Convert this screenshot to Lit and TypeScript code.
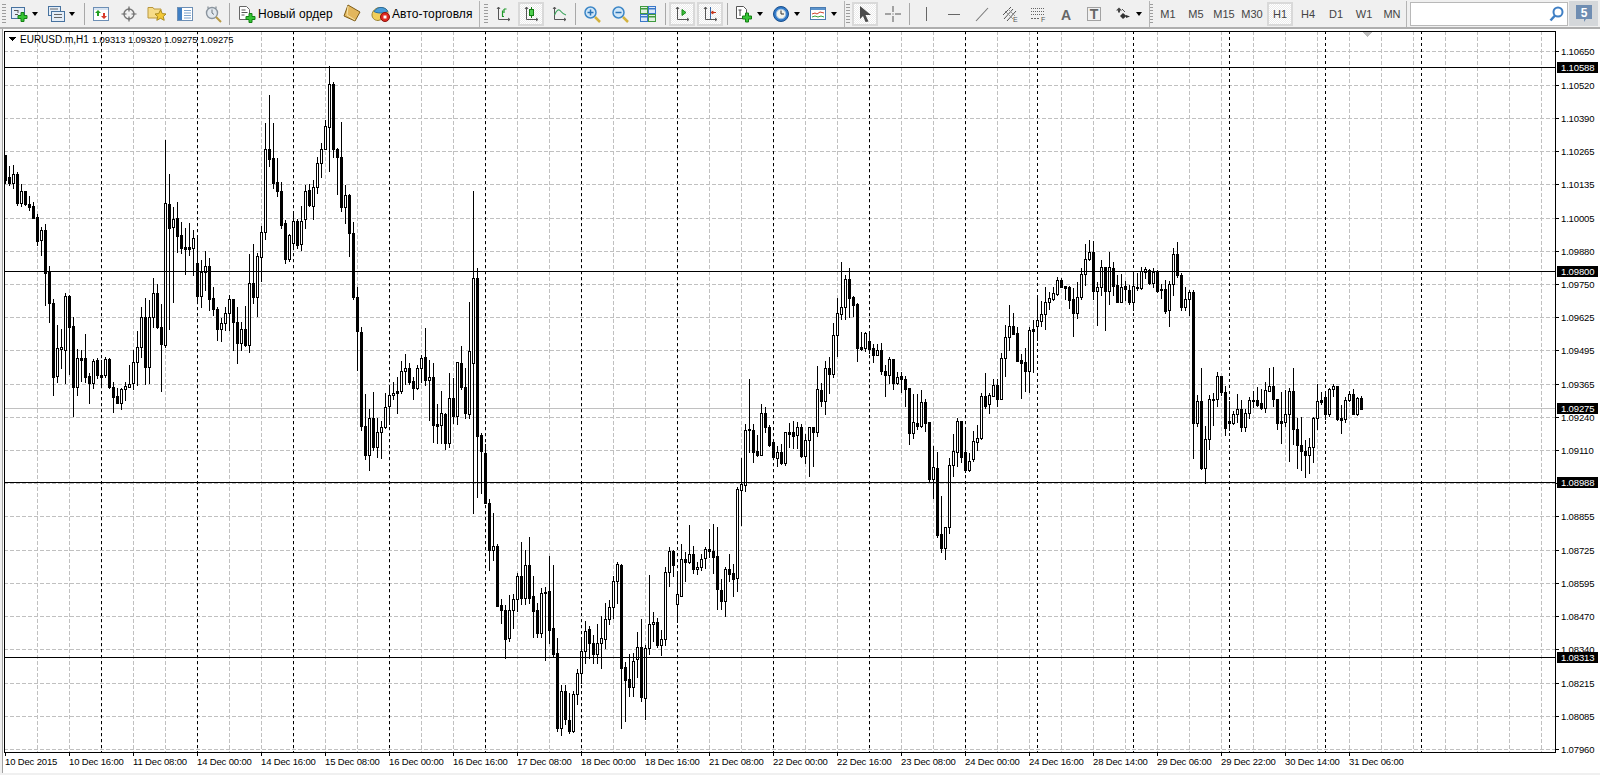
import { LitElement, html, css, svg } from 'lit';
import { customElement } from 'lit/decorators.js';

// candles, read off the chart: [wick top, wick bottom, body top, body bottom, bull]
// each block is in its own scaled units, y = y0 + v / scale
type Row = [number, number, number, number, number];
interface Block {
  y0: number;
  scale: number;
  rows: Row[];
}

const BLOCKS: Block[] = [
  {
    y0: 120,
    scale: 3,
    rows: [
      [105, 188, 105, 180, 0], [138, 195, 170, 188, 0], [135, 205, 163, 188, 1], [155, 255, 162, 250, 0],
      [193, 257, 214, 250, 1], [213, 255, 213, 253, 0], [228, 270, 252, 260, 0], [245, 295, 259, 293, 0],
      [283, 375, 292, 362, 0], [320, 405, 331, 361, 1], [313, 555, 330, 458, 0], [438, 605, 455, 550, 0],
      [538, 825, 550, 770, 0], [615, 785, 685, 767, 1], [628, 745, 682, 687, 1], [518, 790, 528, 690, 1],
      [525, 762, 528, 620, 0], [590, 888, 618, 800, 0], [688, 825, 715, 802, 1], [690, 782, 714, 720, 0],
      [642, 785, 715, 770, 0], [760, 848, 768, 788, 0], [718, 803, 722, 788, 1], [715, 775, 720, 765, 0],
      [720, 800, 765, 770, 0], [712, 772, 718, 766, 1], [715, 805, 718, 802, 0], [785, 875, 802, 830, 0],
      [803, 850, 828, 848, 0], [805, 868, 808, 848, 1], [785, 840, 798, 808, 1], [735, 800, 793, 800, 1],
      [690, 808, 727, 790, 1], [632, 795, 680, 727, 1], [560, 712, 592, 680, 1], [535, 792, 590, 742, 0],
      [540, 790, 592, 742, 1], [475, 620, 520, 590, 1], [492, 625, 520, 622, 0], [553, 812, 620, 673, 0],
      [60, 680, 250, 675, 1], [163, 627, 253, 325, 0], [260, 545, 296, 322, 1], [247, 395, 295, 347, 0],
      [305, 400, 345, 383, 0], [325, 462, 381, 386, 0], [310, 405, 381, 386, 0], [330, 465, 355, 385, 1],
      [345, 550, 428, 527, 0], [420, 560, 455, 527, 1], [392, 510, 438, 455, 1], [415, 570, 438, 537, 0],
      [502, 585, 535, 568, 0], [560, 660, 568, 628, 0], [595, 662, 610, 628, 1], [562, 630, 580, 610, 1],
      [525, 630, 538, 580, 1], [537, 690, 538, 605, 0], [560, 728, 605, 668, 0], [605, 690, 628, 668, 1],
      [558, 678, 628, 676, 0], [403, 695, 490, 675, 1], [372, 548, 490, 530, 0], [398, 588, 408, 530, 1],
    ],
  },
  {
    y0: 60,
    scale: 3,
    rows: [
      [498, 662, 515, 590, 1], [190, 537, 268, 515, 1], [105, 318, 268, 296, 0], [190, 383, 295, 368, 0],
      [295, 407, 367, 392, 0], [367, 503, 392, 494, 0], [480, 608, 490, 596, 0], [522, 602, 526, 596, 1],
      [455, 557, 484, 548, 1], [478, 565, 484, 554, 0], [438, 570, 482, 551, 1], [375, 505, 394, 478, 1],
      [372, 438, 390, 436, 0], [360, 477, 380, 437, 1], [290, 398, 310, 380, 1], [250, 350, 268, 310, 1],
      [180, 268, 199, 268, 1], [18, 333, 73, 200, 1], [67, 290, 72, 266, 0], [265, 402, 266, 290, 0],
      [187, 452, 290, 442, 0], [375, 490, 405, 440, 1], [403, 587, 405, 520, 0], [487, 716, 520, 710, 0],
      [682, 930, 710, 812, 0], [802, 1110, 815, 1097, 0], [1003, 1197, 1097, 1184, 0], [1048, 1230, 1075, 1184, 1],
      [996, 1170, 1075, 1160, 0], [1075, 1190, 1117, 1160, 1], [1083, 1193, 1100, 1117, 1], [998, 1105, 1042, 1100, 1],
      [985, 1092, 1006, 1037, 1], [965, 1017, 1000, 1006, 1], [950, 1058, 994, 998, 0], [903, 1000, 934, 994, 1],
      [882, 972, 925, 932, 1], [910, 973, 925, 966, 0], [950, 1017, 964, 983, 0], [915, 987, 925, 984, 1],
      [885, 965, 895, 925, 1], [805, 975, 892, 959, 0], [900, 1080, 952, 959, 1], [910, 1147, 952, 1095, 0],
      [1033, 1148, 1093, 1097, 0], [993, 1150, 1060, 1096, 1], [1060, 1167, 1062, 1148, 0], [940, 1160, 1015, 1148, 1],
      [955, 1090, 1015, 1067, 0], [905, 1092, 907, 1067, 1], [858, 986, 910, 980, 0], [925, 1075, 980, 1060, 0],
    ],
  },
  {
    y0: 180,
    scale: 2.8,
    rows: [
      [342, 665, 480, 655, 1], [30, 932, 275, 513, 1], [247, 888, 275, 716, 0], [708, 875, 715, 758, 0],
      [740, 905, 763, 905, 0], [893, 1092, 905, 1037, 0], [932, 1063, 1026, 1035, 1], [1020, 1192, 1026, 1192, 0],
      [1173, 1240, 1190, 1203, 0], [1190, 1337, 1205, 1284, 0], [1162, 1290, 1205, 1281, 1], [1160, 1254, 1174, 1205, 1],
      [1100, 1207, 1110, 1174, 1], [1014, 1187, 1110, 1170, 0], [1036, 1187, 1079, 1170, 1], [1000, 1185, 1079, 1170, 0],
      [1108, 1280, 1165, 1206, 0], [1185, 1280, 1205, 1268, 0], [1143, 1280, 1155, 1268, 1], [1140, 1343, 1153, 1156, 0],
      [1053, 1295, 1152, 1260, 0], [1078, 1332, 1255, 1327, 0], [1283, 1543, 1323, 1533, 0], [1414, 1553, 1432, 1533, 1],
      [1415, 1523, 1432, 1510, 0], [1435, 1547, 1513, 1543, 0], [1430, 1545, 1440, 1542, 1], [1370, 1467, 1381, 1440, 1],
      [1282, 1407, 1320, 1381, 1], [1235, 1352, 1262, 1320, 1], [1250, 1337, 1258, 1295, 0], [1273, 1352, 1296, 1327, 0],
      [1243, 1352, 1295, 1326, 1],
    ],
  },
  {
    y0: 370,
    scale: 3,
    rows: [
      [737, 893, 805, 820, 1], [700, 833, 748, 806, 1], [690, 762, 710, 748, 1], [618, 745, 634, 710, 1],
      [577, 698, 583, 632, 1], [583, 1073, 585, 893, 0], [877, 1052, 892, 930, 0], [852, 977, 928, 950, 0],
      [850, 977, 872, 950, 1], [787, 922, 832, 868, 1], [748, 992, 832, 980, 0], [825, 1047, 835, 983, 1],
      [615, 853, 763, 835, 1], [725, 813, 755, 763, 1], [745, 830, 757, 825, 0], [780, 855, 808, 825, 1],
      [590, 825, 607, 808, 1], [530, 648, 544, 607, 1], [540, 617, 544, 585, 0], [603, 755, 673, 703, 1],
      [522, 677, 568, 677, 1], [547, 632, 568, 575, 0], [465, 580, 553, 575, 1], [528, 608, 553, 596, 0],
      [575, 613, 590, 598, 1], [552, 600, 566, 590, 1], [530, 595, 538, 565, 1], [477, 560, 538, 542, 0],
      [462, 608, 542, 560, 0], [472, 717, 559, 658, 0], [628, 717, 660, 692, 0], [590, 738, 598, 692, 1],
      [553, 632, 598, 611, 0], [582, 678, 610, 628, 0], [352, 662, 358, 625, 1], [265, 465, 343, 361, 1],
      [163, 362, 181, 346, 1], [28, 245, 178, 181, 0], [163, 275, 181, 245, 0], [195, 258, 243, 254, 0],
      [103, 255, 130, 254, 1], [112, 185, 130, 172, 0], [165, 228, 172, 225, 0], [213, 268, 217, 260, 0],
    ],
  },
  {
    y0: 250,
    scale: 3,
    rows: [
      [588, 648, 605, 625, 1], [583, 642, 607, 640, 0], [545, 645, 547, 640, 1], [520, 590, 547, 551, 0],
      [514, 595, 547, 557, 0], [517, 595, 532, 556, 1], [522, 620, 532, 617, 0], [552, 638, 571, 617, 1],
      [530, 677, 532, 571, 1], [530, 648, 532, 547, 0], [348, 557, 418, 547, 1], [400, 467, 420, 452, 0],
      [332, 492, 355, 452, 1], [322, 428, 355, 371, 0], [220, 380, 256, 371, 1], [145, 318, 190, 256, 1],
      [37, 207, 172, 191, 1], [75, 207, 88, 172, 1], [55, 200, 88, 143, 0], [138, 197, 142, 164, 0],
      [160, 332, 163, 293, 0], [247, 300, 292, 297, 0], [247, 302, 250, 295, 1], [245, 310, 274, 296, 0],
      [283, 335, 295, 314, 0], [283, 315, 301, 314, 1], [280, 373, 301, 362, 0], [345, 437, 362, 374, 0],
      [320, 400, 328, 374, 1], [328, 417, 328, 398, 0], [365, 402, 380, 398, 1], [365, 425, 379, 388, 0],
      [378, 468, 388, 416, 0], [415, 582, 415, 548, 0], [432, 565, 517, 548, 1], [432, 537, 520, 527, 0],
      [420, 530, 457, 527, 1], [448, 543, 457, 518, 0], [515, 697, 517, 687, 0], [587, 743, 652, 686, 1],
      [606, 860, 655, 855, 0], [738, 905, 853, 893, 0], [830, 927, 832, 893, 1], [625, 850, 646, 832, 1],
      [552, 678, 604, 646, 1], [503, 648, 514, 605, 1], [515, 635, 514, 620, 0], [530, 665, 607, 660, 0],
      [610, 662, 632, 660, 1], [543, 632, 574, 628, 1],
    ],
  },
  {
    y0: 230,
    scale: 3,
    rows: [
      [585, 660, 625, 635, 1], [490, 628, 499, 625, 1], [430, 535, 499, 527, 0], [490, 548, 495, 523, 1],
      [448, 497, 466, 497, 1], [447, 527, 465, 506, 0], [368, 506, 385, 506, 1], [285, 437, 322, 385, 1],
      [225, 360, 289, 322, 1], [250, 312, 289, 311, 0], [290, 392, 310, 392, 0], [373, 503, 391, 398, 0],
      [354, 483, 396, 423, 0], [290, 485, 301, 422, 1], [270, 425, 298, 302, 0], [195, 330, 271, 287, 1],
      [213, 288, 253, 272, 1], [170, 297, 217, 253, 1], [185, 237, 205, 217, 1], [170, 210, 190, 208, 1],
      [142, 194, 151, 191, 1], [145, 172, 151, 170, 0], [167, 207, 169, 173, 0], [168, 233, 172, 210, 0],
      [173, 317, 208, 248, 0], [155, 263, 202, 248, 1], [115, 207, 132, 200, 1], [43, 165, 88, 133, 1],
      [30, 90, 67, 88, 1], [33, 207, 66, 182, 0], [155, 285, 172, 182, 1], [90, 195, 112, 172, 1],
      [110, 300, 111, 182, 0], [67, 222, 112, 182, 1], [95, 195, 115, 168, 0], [135, 215, 165, 215, 0],
      [133, 217, 170, 215, 1], [153, 210, 168, 178, 0], [165, 222, 181, 216, 0], [130, 240, 169, 217, 1],
      [130, 180, 171, 173, 0], [110, 176, 124, 173, 1], [110, 145, 118, 127, 1], [117, 163, 119, 158, 0],
      [115, 172, 125, 158, 1], [120, 185, 124, 182, 0], [163, 205, 178, 181, 0], [150, 250, 177, 242, 0],
      [153, 287, 163, 241, 1], [55, 195, 73, 163, 1], [37, 140, 73, 136, 0], [130, 240, 136, 230, 0],
      [170, 240, 208, 230, 1], [180, 255, 185, 208, 1],
    ],
  },
  {
    y0: 340,
    scale: 3,
    rows: [
      [-150, 353, -145, 248, 0], [165, 258, 183, 248, 1], [85, 388, 183, 385, 0], [258, 430, 298, 383, 1],
      [165, 328, 178, 298, 1], [160, 255, 177, 180, 0], [97, 197, 108, 178, 1], [108, 165, 108, 155, 0],
      [138, 285, 156, 263, 0], [183, 270, 244, 248, 0], [212, 252, 223, 248, 1], [163, 247, 208, 223, 1],
      [180, 273, 207, 260, 0], [207, 273, 220, 260, 1], [172, 233, 180, 220, 1], [153, 200, 181, 184, 0],
      [140, 198, 181, 194, 0], [148, 207, 190, 205, 0], [125, 217, 151, 205, 1], [85, 152, 139, 152, 1],
      [82, 197, 139, 178, 0], [178, 267, 178, 250, 0], [155, 308, 243, 248, 0], [150, 257, 223, 245, 1],
      [143, 362, 153, 223, 1], [85, 312, 153, 268, 0], [235, 383, 268, 314, 0], [232, 390, 316, 332, 0],
      [300, 410, 332, 344, 0], [295, 400, 322, 344, 1], [232, 367, 235, 322, 1], [132, 268, 184, 235, 1],
      [157, 193, 180, 185, 0], [152, 237, 172, 221, 0], [145, 228, 148, 221, 1], [133, 168, 139, 148, 1],
      [138, 240, 139, 238, 0], [195, 278, 234, 239, 0], [170, 245, 181, 238, 1], [152, 183, 163, 181, 1],
      [148, 223, 163, 221, 0], [170, 225, 175, 221, 1], [168, 207, 175, 206, 0],
    ],
  },
];

const CANDLES = BLOCKS.flatMap((b) =>
  b.rows.map(([hi, lo, top, bottom, bull]) => ({
    hi: Math.round(b.y0 + hi / b.scale),
    lo: Math.round(b.y0 + lo / b.scale),
    top: Math.round(b.y0 + top / b.scale),
    bottom: Math.round(b.y0 + bottom / b.scale),
    bull: bull === 1,
  }))
);

const PRICES = [
  '1.10650', '1.10520', '1.10390', '1.10265', '1.10135', '1.10005', '1.09880', '1.09750', '1.09625', '1.09495', '1.09365',
  '1.09240', '1.09110', '1.08985', '1.08855', '1.08725', '1.08595', '1.08470', '1.08340', '1.08215', '1.08085', '1.07960',
];
const priceY = (k: number) => Math.round(51.4 + 33.22 * k);

const DATES = [
  '10 Dec 2015', '10 Dec 16:00', '11 Dec 08:00', '14 Dec 00:00', '14 Dec 16:00', '15 Dec 08:00', '16 Dec 00:00', '16 Dec 16:00',
  '17 Dec 08:00', '18 Dec 00:00', '18 Dec 16:00', '21 Dec 08:00', '22 Dec 00:00', '22 Dec 16:00', '23 Dec 08:00', '24 Dec 00:00',
  '24 Dec 16:00', '28 Dec 14:00', '29 Dec 06:00', '29 Dec 22:00', '30 Dec 14:00', '31 Dec 06:00',
];

const LEVELS = [
  { y: 67, label: '1.10588' },
  { y: 271, label: '1.09800' },
  { y: 482, label: '1.08988' },
  { y: 657, label: '1.08313' },
];

const GREY_X = Array.from({ length: 48 }, (_, k) => 37 + 32 * k);
const BLACK_X = [101, 197, 293, 389, 485, 581, 677, 773, 869, 965, 1037, 1133, 1229, 1325, 1421];

const L = 4, R = 1555, T = 31, B = 752;

const plus = (x: number, y: number) => svg`<path transform="translate(${x} ${y})" d="M3 .5h3v3h3v3H6v3H3v-3H0v-3h3z" fill="#35c535" stroke="#147f14"/>`;
const axes = svg`<path d="M3.5 1v12.5H15M2 3l1.5-2L5 3M13 12l2 1.5-2 1.5" fill="none" stroke="#555"/>`;

const ICONS: Record<string, unknown> = {
  newchart: svg`<rect x=".5" y="1.5" width="13" height="11" fill="#e4edf7" stroke="#47729f"/><path d="M3 4.5h4M7 4v3M4 8.5h3" stroke="#555"/>${plus(7, 6)}`,
  profiles: svg`<rect x=".5" y=".5" width="12" height="9" fill="#e4edf7" stroke="#47729f"/><rect x="3.5" y="5.5" width="13" height="10" fill="#e4edf7" stroke="#47729f"/><path d="M6 8.5h8M6 11.5h8M2 3h8" stroke="#666"/>`,
  watch: svg`<rect x=".5" y="1.5" width="15" height="13" fill="#fff" stroke="#6d8fb5"/><rect x="1" y="2" width="14" height="2" fill="#d8e4f2"/><path d="M5 4l3 3H6v3H4V7H2z" fill="#22a022"/><path d="M11 13l3-3h-2V7h-2v3H8z" fill="#d83a2a"/>`,
  cross: svg`<circle cx="8" cy="8" r="5" fill="none" stroke="#777" stroke-width="1.4"/><path d="M8 .5v5M8 10.500v5M.5 8h5M10.500 8h5" stroke="#666" stroke-width="1.2"/>`,
  star: svg`<path d="M-1 1.500h5l1 1.500h7v9H-1z" fill="#f6dc88" stroke="#b9973f"/><path d="M11.500 4l1.800 3.600 3.700.4-2.700 2.500.9 3.800-3.700-2-3.700 2 .9-3.800-2.700-2.500 3.700-.4z" fill="#f3c938" stroke="#a98a20"/>`,
  nav: svg`<rect x=".5" y="1.5" width="15" height="13" fill="#fff" stroke="#6d8fb5"/><rect x="1" y="2" width="4" height="12" fill="#3f7fc4"/><path d="M7 4.500h7M7 7h7M7 9.500h7M7 12h7" stroke="#7fa4cc"/>`,
  tester: svg`<circle cx="7" cy="7" r="5.500" fill="#e2e8ee" stroke="#8a949e" stroke-width="1.400"/><path d="M7 3.500V7l2 1.500M3 .5v2M11 .5v2" fill="none" stroke="#6b7680"/><path d="M11 11l5 5" stroke="#b99a45" stroke-width="2"/>`,
  order: svg`<path d="M.5 .5h7l3 3v10H.5z" fill="#fff" stroke="#666"/><path d="M2.500 4h4M2.500 6.500h6M2.500 9h3" stroke="#555"/>${plus(7, 7)}`,
  gold: svg`<path d="M4 -1L16 6L11 15L0 10Z" fill="#e2b65c" stroke="#7d5c18"/><path d="M4 0L3 9l8 5" fill="none" stroke="#f7e3a8"/>`,
  auto: svg`<path d="M1 9c0-4 4-7.500 8-7.500s8 2 8 5-2 3-3 3-3 5-7 5-6-3-6-5.500z" fill="#f2cf5a" stroke="#9a8332"/><path d="M3 5.500c2-3 5-4.500 8-4 3 .5 5.500 2 5.500 4-4 2-10 2-13.500 0z" fill="#4b9ed8" stroke="#2c6d9f"/><circle cx="14" cy="11" r="4.500" fill="#e02b20" stroke="#8c120c"/><rect x="12.500" y="9.500" width="3" height="3" fill="#fff"/>`,
  bars: svg`${axes}<path d="M7.500 10.500V4.500M7 10.500H9M9 7V3M9 3h2.500" fill="none" stroke="#1f9a2a" stroke-width="1.200"/>`,
  candle: svg`${axes}<rect x="6.500" y="3.500" width="4" height="6" fill="#4fcf4f" stroke="#157f15"/><path d="M8.500 1v2.500M8.500 9.500V12" stroke="#157f15"/>`,
  curve: svg`${axes}<path d="M3.500 9C6 3 8 3 10 5.500s3 3 5 3.500" fill="none" stroke="#3da35d" stroke-width="1.200"/>`,
  zoomin: svg`<circle cx="6.500" cy="6.500" r="5.500" fill="#cfe6f8" stroke="#3c86c6" stroke-width="1.500"/><path d="M3.500 6.500h6M6.500 3.500v6" stroke="#2a73b5" stroke-width="1.500"/><path d="M11 11l5 5" stroke="#d3b23e" stroke-width="2.500"/>`,
  zoomout: svg`<circle cx="6.500" cy="6.500" r="5.500" fill="#cfe6f8" stroke="#3c86c6" stroke-width="1.500"/><path d="M3.500 6.500h6" stroke="#2a73b5" stroke-width="1.500"/><path d="M11 11l5 5" stroke="#d3b23e" stroke-width="2.500"/>`,
  tile: svg`<rect x=".5" y=".5" width="7" height="7" fill="#dff0df" stroke="#3f9a3f"/><rect x="8.500" y=".5" width="7" height="7" fill="#dbe8f8" stroke="#3a78c8"/><rect x=".5" y="8.500" width="7" height="7" fill="#dbe8f8" stroke="#3a78c8"/><rect x="8.500" y="8.500" width="7" height="7" fill="#dff0df" stroke="#3f9a3f"/><path d="M1 2h6v1.500H1z" fill="#3f9a3f"/><path d="M9 2h6v1.500H9z" fill="#3a78c8"/><path d="M1 10h6v1.500H1z" fill="#3a78c8"/><path d="M9 10h6v1.500H9z" fill="#3f9a3f"/>`,
  scroll: svg`${axes}<path d="M8 3.500l4 3-4 3z" fill="#3cc03c" stroke="#1a8a1a"/>`,
  shift: svg`${axes}<path d="M8.500 1v12" stroke="#3a6aa8"/><path d="M14 6.500h-3V5L9 6.500 11 8V6.500z" fill="#d84020" stroke="#c03018"/>`,
  indicator: svg`<path d="M.5 .5h7l3 3v9H.5z" fill="#fff" stroke="#555"/><path d="M2.500 4h3M4 4v6" stroke="#444"/>${plus(6.500, 6.500)}`,
  clock: svg`<circle cx="8" cy="8" r="7.500" fill="#2f79c8" stroke="#1a4f8c"/><circle cx="8" cy="8" r="4.800" fill="#f4f4ea" stroke="#9ec0e2"/><path d="M8 4.500V8h3" fill="none" stroke="#333"/>`,
  template: svg`<rect x=".5" y="1.500" width="15" height="12" fill="#fff" stroke="#4a7bb0"/><rect x="1" y="2" width="14" height="2" fill="#5b93cc"/><path d="M2 8l3-1 2 1 3-2 4 1" fill="none" stroke="#d0402a"/><path d="M2 11l3-1 3 1 3-1 3 1" fill="none" stroke="#3aa03a"/>`,
  cursor: svg`<path d="M3 0l11 9H8.500l3 6.500-3 .5L6 10 3 13z" fill="#4a4a4a"/>`,
  plusline: svg`<path d="M8 0v6M8 10v6M0 8h6M10 8h6" stroke="#555"/><path d="M8 7v2M7 8h2" stroke="#bbb"/>`,
  vline: svg`<path d="M8.500 1v14" stroke="#666"/>`,
  hline: svg`<path d="M2 8.500h12" stroke="#666"/>`,
  trend: svg`<path d="M2 15L14 2" stroke="#777" stroke-width="1.100"/>`,
  channel: svg`<path d="M1 9L9 1M2 13L11 3M5 15L14 5" stroke="#555"/><path d="M3 5l8 8M6 3l7 7" stroke="#999"/><text class="ico-t" x="11" y="16">E</text>`,
  fib: svg`<path d="M1 2.500h14M1 5.500h14M1 8.500h14" stroke="#666" stroke-dasharray="1 1"/><path d="M1 12.500h9" stroke="#666" stroke-dasharray="2 1"/><text class="ico-t" x="11" y="16">F</text>`,
  letter: svg`<text class="ico-a" x="8" y="14" text-anchor="middle">A</text>`,
  textbox: svg`<rect x="1.500" y="1.500" width="13" height="13" fill="none" stroke="#555" stroke-dasharray="1 1"/><text class="ico-a" x="8" y="13" text-anchor="middle">T</text>`,
  arrows: svg`<path d="M1 4.500l3-3 3 3H5v2H3v-2z" fill="#444"/><path d="M8 7l3.500 3L8 13l-3-3z" fill="#333"/><path d="M7 3l3 3" stroke="#555"/><path d="M11 9l4 1.500-4 1.500z" fill="#333"/>`,
};

type Item =
  | { k: 'grip'; c: string }
  | { k: 'sep'; c: string }
  | { k: 'btn'; i: string; on?: boolean }
  | { k: 'dd'; i: string; c?: string }
  | { k: 'txt'; i: string; t: string; c: string }
  | { k: 'tf'; t: string; on?: boolean };

const btn = (i: string, on = false): Item => ({ k: 'btn', i, on });
const sep = (c = 's5'): Item => ({ k: 'sep', c });
const dd = (i: string, c = ''): Item => ({ k: 'dd', i, c });
const tf = (t: string, on = false): Item => ({ k: 'tf', t, on });

const BANDS: { c: string; items: Item[] }[] = [
  {
    c: 'b1',
    items: [
      { k: 'grip', c: 'g8' }, dd('newchart'), dd('profiles'), sep(),
      btn('watch'), btn('cross'), btn('star'), btn('nav'), btn('tester'), sep(),
      { k: 'txt', i: 'order', t: 'Новый ордер', c: 'order' }, btn('gold'),
      { k: 'txt', i: 'auto', t: 'Авто-торговля', c: 'autot' },
    ],
  },
  {
    c: 'b2',
    items: [
      { k: 'grip', c: 'g9' }, btn('bars'), btn('candle', true), btn('curve'), sep(),
      btn('zoomin'), btn('zoomout'), btn('tile'), sep('s6'),
      btn('scroll', true), btn('shift', true), sep('s9'),
      dd('indicator'), dd('clock'), dd('template'),
    ],
  },
  {
    c: 'b3',
    items: [
      { k: 'grip', c: 'g6' }, btn('cursor', true), btn('plusline'), sep(),
      btn('vline'), btn('hline'), btn('trend'), btn('channel'), btn('fib'), btn('letter'), btn('textbox'),
      dd('arrows', 'last'),
    ],
  },
  {
    c: 'b4',
    items: [
      { k: 'grip', c: 'g4' }, tf('M1'), tf('M5'), tf('M15'), tf('M30'), tf('H1', true), tf('H4'), tf('D1'), tf('W1'), tf('MN'),
    ],
  },
];

@customElement('app-root')
export class AppRoot extends LitElement {
  static styles = css`
    :host {
      display: block;
      width: 1600px;
      height: 775px;
      overflow: hidden;
      background: #f0f0f0;
      font-family: 'Liberation Sans', Arial, sans-serif;
      color: #000;
    }
    .toolbar {
      display: flex;
      box-sizing: border-box;
      height: 29px;
      padding-top: 1px;
      background: #f0f0f0;
      border-bottom: 2px solid #aeaeae;
    }
    .band {
      display: flex;
      align-items: center;
      flex: none;
      height: 26px;
      border-right: 1px solid #b4b4b4;
      box-sizing: content-box;
    }
    .b1 { padding-right: 1px; }
    .grip {
      flex: none;
      align-self: center;
      height: 20px;
      background: repeating-linear-gradient(#9c9c9c 0 1px, transparent 1px 3px) no-repeat 2px 0 / 4px 100%;
    }
    .g8 { width: 8px; }
    .g9 { width: 9px; background-position: 4px 0; }
    .g6 { width: 6px; background-position: 1px 0; }
    .g4 { width: 4px; background-size: 3px 100%; background-position: 0 0; }
    .sep { flex: none; display: flex; justify-content: center; height: 22px; }
    .sep::after { content: ''; width: 1px; background: #a8a8a8; }
    .s5 { width: 5px; }
    .s6 { width: 6px; }
    .s9 { width: 5px; margin: 0 3px 0 1px; }
    .btn {
      flex: none;
      display: flex;
      align-items: center;
      justify-content: center;
      box-sizing: border-box;
      width: 28px;
      height: 24px;
    }
    .on {
      background: repeating-conic-gradient(#fff 0 25%, #ececec 0 50%) 0 0 / 2px 2px;
      border: 2px solid #d9d9d9;
      margin: 0 1px;
      width: 26px;
    }
    .ico { width: 16px; height: 16px; flex: none; overflow: visible; }
    .ico.auto { width: 20px; }
    .dd {
      flex: none;
      display: flex;
      align-items: center;
      box-sizing: border-box;
      width: 37px;
      padding-left: 3px;
    }
    .dd::after {
      content: '';
      margin-left: 5px;
      border: 3px solid transparent;
      border-top: 4px solid #000;
      border-bottom: 0;
    }
    .last { margin-left: 4px; }
    .txt {
      flex: none;
      display: flex;
      align-items: center;
      box-sizing: border-box;
      font-size: 12px;
      letter-spacing: 0.1px;
      white-space: nowrap;
    }
    .order { width: 106px; padding-left: 7px; gap: 3px; }
    .autot { width: 112px; padding-left: 5px; gap: 1px; }
    .tf {
      flex: none;
      box-sizing: border-box;
      width: 28px;
      height: 24px;
      line-height: 24px;
      text-align: center;
      font-size: 11px;
      color: #444;
    }
    .tf.on { width: 26px; line-height: 20px; }
    .search {
      flex: none;
      display: flex;
      align-items: center;
      justify-content: flex-end;
      box-sizing: border-box;
      width: 158px;
      height: 24px;
      margin: 1px 0 0 3px;
      padding-right: 3px;
      background: #fff;
      border: 1px solid #b8b8b8;
    }
    .notify {
      flex: none;
      display: flex;
      align-items: center;
      justify-content: center;
      width: 29px;
      height: 25px;
      margin: 0 0 0 1px;
      background: #d4d7da;
    }
    .chart {
      box-sizing: border-box;
      height: 744px;
      padding-left: 3px;
    }
    .chart svg {
      display: block;
      background: #fff;
      border-left: 1px solid #a0a0a0;
      margin-left: -1px;
    }
    .px { font: 9.5px 'Liberation Sans', Arial, sans-serif; letter-spacing: -0.15px; fill: #000; }
    .px.inv { fill: #fff; }
    .sym { font: 10px 'Liberation Sans', Arial, sans-serif; fill: #000; }
    .ico-t { font: 7px 'Liberation Sans', Arial, sans-serif; fill: #555; }
    .ico-a { font: bold 14px 'Liberation Sans', Arial, sans-serif; fill: #666; }
    .five { font: bold 12px 'Liberation Sans', Arial, sans-serif; fill: #fff; }
  `;

  private renderIcon(name: string) {
    return html`<svg class="ico ${name === 'auto' ? 'auto' : ''}" viewBox="${name === 'auto' ? '0 0 20 16' : '0 0 16 16'}">${ICONS[name]}</svg>`;
  }

  private renderItem(it: Item) {
    switch (it.k) {
      case 'grip':
        return html`<div class="grip ${it.c}"></div>`;
      case 'sep':
        return html`<div class="sep ${it.c}"></div>`;
      case 'btn':
        return html`<div class="btn ${it.on ? 'on' : ''}">${this.renderIcon(it.i)}</div>`;
      case 'dd':
        return html`<div class="dd ${it.c ?? ''}">${this.renderIcon(it.i)}</div>`;
      case 'txt':
        return html`<div class="txt ${it.c}">${this.renderIcon(it.i)}<span>${it.t}</span></div>`;
      case 'tf':
        return html`<div class="tf ${it.on ? 'on' : ''}">${it.t}</div>`;
    }
  }

  private renderCandles() {
    return CANDLES.map((c, i) => {
      const x = 5 + 4 * i;
      return svg`<path d="M${x + 0.5} ${c.hi}V${c.lo + 1}" stroke="#000" />
        <rect x=${x - 0.5} y=${c.top + 0.5} width="2" height=${Math.max(c.bottom - c.top, 1)} fill=${c.bull ? '#fff' : '#000'} stroke="#000" />`;
    });
  }

  private renderChart() {
    return html`<svg width="1597" height="744" viewBox="3 29 1597 744" shape-rendering="crispEdges">
      ${PRICES.map((_, k) => svg`<path d="M${L} ${priceY(k) + 0.5}H${R}" stroke="#c0c0c0" stroke-dasharray="4 2" />`)}
      ${GREY_X.map((x) => svg`<path d="M${x + 0.5} ${T}V${B}" stroke="#c0c0c0" stroke-dasharray="4 2" />`)}
      ${BLACK_X.map((x) => svg`<path d="M${x + 0.5} ${T}V${B}" stroke="#000" stroke-dasharray="3 3" />`)}
      <path d="M${L} 408.500H${R}" stroke="#c0c0c0" />
      ${this.renderCandles()}
      ${LEVELS.map((l) => svg`<path d="M${L} ${l.y + 0.5}H${R}" stroke="#000" />`)}

      <rect x=${L + 0.5} y=${T + 0.5} width=${R - L} height=${B - T} fill="none" stroke="#000" />
      <path d="M1363 32h9l-4.500 5z" fill="#bdbdbd" />

      <path d="M9 37h7l-3.500 4z" fill="#000" />
      <text class="sym" x="20" y="43">EURUSD.m,H1</text>
      ${['1.09313', '1.09320', '1.09275', '1.09275'].map((v, i) => svg`<text class="px" x=${92 + i * 36} y="43">${v}</text>`)}

      ${PRICES.map((p, k) => svg`<path d="M${R} ${priceY(k) + 0.5}h4" stroke="#000" />
        <text class="px" x="1561" y=${priceY(k) + 4}>${p}</text>`)}
      ${[...LEVELS, { y: 408, label: '1.09275' }].map(
        (l) => svg`<rect x="1557" y=${l.y - 5} width="41" height="11" fill="#000" />
          <text class="px inv" x="1561" y=${l.y + 4}>${l.label}</text>`
      )}

      ${DATES.map((d, i) => svg`<path d="M${5.5 + 64 * i} ${B}v4" stroke="#000" />
        <text class="px" x=${5 + 64 * i} y="765">${d}</text>`)}
    </svg>`;
  }

  render() {
    return html`
      <div class="toolbar">
        ${BANDS.map((b) => html`<div class="band ${b.c}">${b.items.map((it) => this.renderItem(it))}</div>`)}
        <div class="search">
          <svg class="ico" viewBox="0 0 16 16">
            <circle cx="10" cy="6" r="4.500" fill="#fff" stroke="#3f7fc4" stroke-width="2" />
            <path d="M7 9.500L2.500 14.500" stroke="#3f7fc4" stroke-width="2.500" />
          </svg>
        </div>
        <div class="notify">
          <svg width="18" height="20" viewBox="0 0 18 20">
            <path d="M1 1h16v14h-6l-2 3v-3H1z" fill="#6f8db2" />
            <text class="five" x="9" y="12.500" text-anchor="middle">5</text>
          </svg>
        </div>
      </div>
      <div class="chart">${this.renderChart()}</div>
    `;
  }
}
